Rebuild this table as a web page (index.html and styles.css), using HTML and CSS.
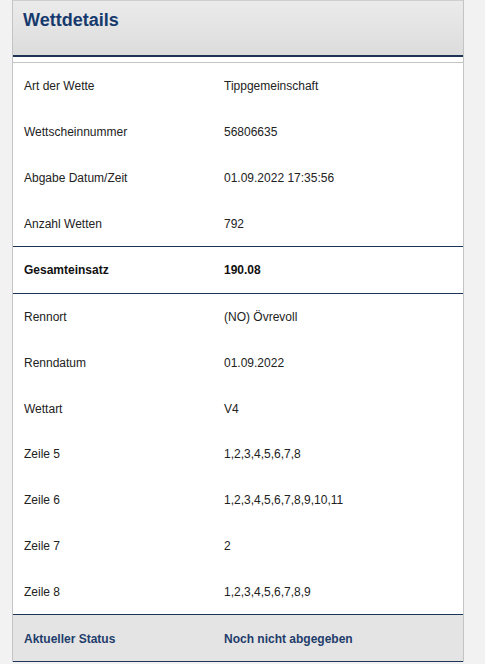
FILE: index.html
```html
<!DOCTYPE html>
<html lang="de">
<head>
<meta charset="utf-8">
<link rel="stylesheet" href="styles.css">
</head>
<body>
<div class="panel">
  <div class="panel-head"><h1 class="title">Wettdetails</h1></div>
  <div class="panel-body">
    <div class="group">
      <div class="row"><span class="label">Art der Wette</span><span class="value">Tippgemeinschaft</span></div>
      <div class="row"><span class="label">Wettscheinnummer</span><span class="value">56806635</span></div>
      <div class="row"><span class="label">Abgabe Datum/Zeit</span><span class="value">01.09.2022 17:35:56</span></div>
      <div class="row"><span class="label">Anzahl Wetten</span><span class="value">792</span></div>
    </div>
    <div class="group total">
      <div class="row"><span class="label">Gesamteinsatz</span><span class="value">190.08</span></div>
    </div>
    <div class="group">
      <div class="row"><span class="label">Rennort</span><span class="value">(NO) Övrevoll</span></div>
      <div class="row"><span class="label">Renndatum</span><span class="value">01.09.2022</span></div>
      <div class="row"><span class="label">Wettart</span><span class="value">V4</span></div>
      <div class="row"><span class="label">Zeile 5</span><span class="value">1,2,3,4,5,6,7,8</span></div>
      <div class="row"><span class="label">Zeile 6</span><span class="value">1,2,3,4,5,6,7,8,9,10,11</span></div>
      <div class="row"><span class="label">Zeile 7</span><span class="value">2</span></div>
      <div class="row"><span class="label">Zeile 8</span><span class="value">1,2,3,4,5,6,7,8,9</span></div>
    </div>
    <div class="group status">
      <div class="row"><span class="label">Aktueller Status</span><span class="value">Noch nicht abgegeben</span></div>
    </div>
  </div>
</div>
</body>
</html>
```
FILE: styles.css
```css
html, body {
  margin: 0;
  padding: 0;
  background: #f2f2f2;
}
body {
  padding: 0 20px 0 12px;
  font-family: "Liberation Sans", Arial, sans-serif;
  font-size: 12px;
  color: #222;
}
.panel {
  width: 450px;
  border: 1px solid #c4c4c4;
  border-bottom: none;
  background: #fff;
}
.panel-head {
  box-sizing: border-box;
  height: 57px;
  margin-top: -1px;
  background: linear-gradient(#ebebeb, #dcdcdc);
  border-top: 1px solid #cfcfcf;
  border-bottom: 2px solid #1c3557;
}
.title {
  margin: 0;
  padding: 8px 0 0 10px;
  font-size: 18px;
  line-height: 22px;
  font-weight: bold;
  color: #163a6e;
}
.panel-body {
  margin-top: 5px;
  border-top: 1px solid #c4c4c4;
}
.group {
  border-bottom: 1px solid #1c3557;
}
.row {
  display: flex;
  align-items: center;
  height: 45.75px;
  padding-left: 11px;
  padding-top: 1px;
  box-sizing: border-box;
}
.label {
  width: 200px;
}
.value {
  flex: 1;
}
.total .row {
  font-weight: bold;
  color: #111;
}
.status {
  background: #e4e4e4;
}
.status .row {
  font-weight: bold;
  color: #1f3d6b;
  height: 46px;
}
```
